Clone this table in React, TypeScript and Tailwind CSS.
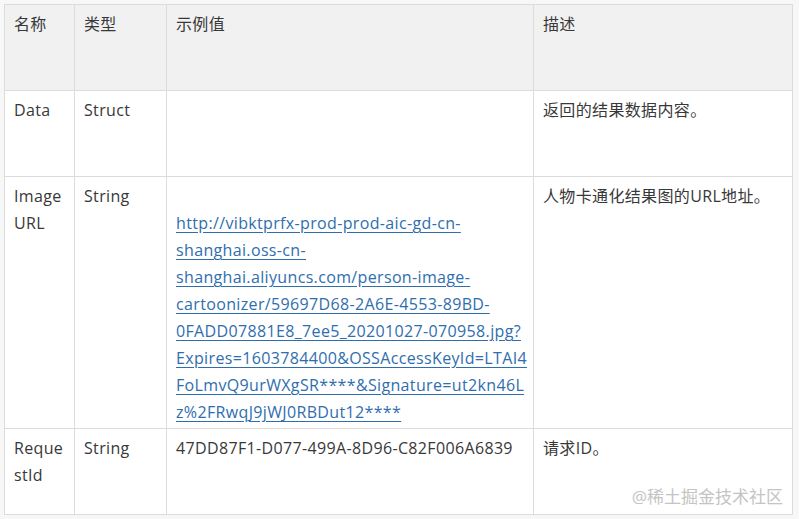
import React from 'react';

const url = [
  'http://vibktprfx-prod-prod-aic-gd-cn-',
  'shanghai.oss-cn-',
  'shanghai.aliyuncs.com/person-image-',
  'cartoonizer/59697D68-2A6E-4553-89BD-',
  '0FADD07881E8_7ee5_20201027-070958.jpg?',
  'Expires=1603784400&OSSAccessKeyId=LTAI4',
  'FoLmvQ9urWXgSR****&Signature=ut2kn46L',
  'z%2FRwqJ9jWJ0RBDut12****',
];

const cell = 'border border-[#dcdcdc] align-top pl-[9px] pr-[8px] pt-[6px]';

const App = () => {
  return (
    <div
      className="min-h-[519px] w-[799px] bg-[#f7f7f7] pt-[4px] pl-[4px] text-[16px] leading-[27px] tracking-[0.35px] text-[#383838]"
      style={{ fontFamily: '"Open Sans", "Noto Sans CJK SC", sans-serif' }}
    >
      <div className="relative w-[788px]">
        <table className="w-[788px] table-fixed border-collapse bg-white">
          <colgroup>
            <col className="w-[70px]" />
            <col className="w-[92px]" />
            <col className="w-[367px]" />
            <col className="w-[259px]" />
          </colgroup>
          <thead>
            <tr className="h-[86px] bg-[#f1f1f1]">
              <th className={`${cell} text-left font-normal`}>名称</th>
              <th className={`${cell} text-left font-normal`}>类型</th>
              <th className={`${cell} text-left font-normal`}>示例值</th>
              <th className={`${cell} text-left font-normal`}>描述</th>
            </tr>
          </thead>
          <tbody>
            <tr className="h-[86px]">
              <td className={cell}>Data</td>
              <td className={cell}>Struct</td>
              <td className={cell}></td>
              <td className={cell}>返回的结果数据内容。</td>
            </tr>
            <tr className="h-[252px]">
              <td className={cell}>
                Image
                <br />
                URL
              </td>
              <td className={cell}>String</td>
              <td className={`${cell} whitespace-nowrap`}>
                <br />
                <a href="#" className="text-[#2f6eae] underline underline-offset-[3px]">
                  {url.map((line, i) => (
                    <React.Fragment key={i}>
                      {line}
                      {i < url.length - 1 && <br />}
                    </React.Fragment>
                  ))}
                </a>
              </td>
              <td className={cell}>人物卡通化结果图的URL地址。</td>
            </tr>
            <tr className="h-[86px]">
              <td className={cell}>
                Reque
                <br />
                stId
              </td>
              <td className={cell}>String</td>
              <td className={`${cell} whitespace-nowrap`}>47DD87F1-D077-499A-8D96-C82F006A6839</td>
              <td className={cell}>请求ID。</td>
            </tr>
          </tbody>
        </table>
        {/* watermark */}
        <div className="absolute right-[9px] bottom-[10px] text-[17px] leading-none tracking-normal text-[#c4c4c4]">
          @稀土掘金技术社区
        </div>
      </div>
    </div>
  );
};

export default App;
